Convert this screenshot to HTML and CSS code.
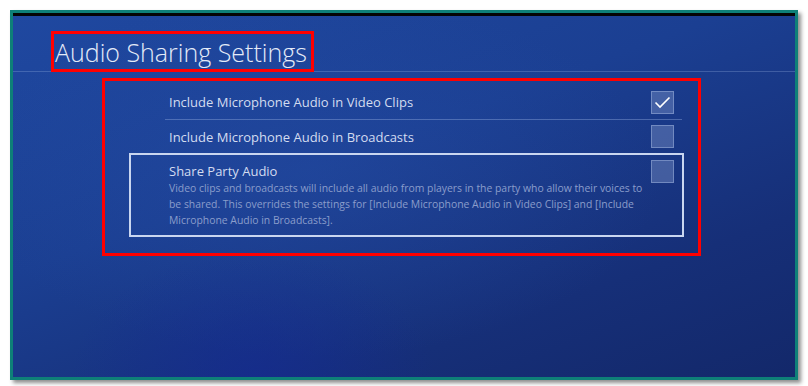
FILE: index.html
```html
<!DOCTYPE html>
<html>
<head>
<meta charset="utf-8">
<link rel="stylesheet" href="styles.css">
</head>
<body>
<div class="frame">
  <div class="screen">
    <div class="header">
      <h1 class="title">Audio Sharing Settings</h1>
    </div>
    <div class="panel">
      <div class="list">
        <div class="row">
          <span class="label">Include Microphone Audio in Video Clips</span>
          <span class="check">
            <svg width="17" height="13" viewBox="0 0 17 13"><path d="M1.5 6.5 L6 11 L15.5 1.5" fill="none" stroke="#ffffff" stroke-width="1.6"/></svg>
          </span>
        </div>
        <div class="row">
          <span class="label">Include Microphone Audio in Broadcasts</span>
          <span class="check"></span>
        </div>
        <div class="row selected">
          <div class="text">
            <div class="label">Share Party Audio</div>
            <div class="desc">Video clips and broadcasts will include all audio from players in the party who allow their voices to be shared. This overrides the settings for [Include Microphone Audio in Video Clips] and [Include Microphone Audio in Broadcasts].</div>
          </div>
          <span class="check"></span>
        </div>
      </div>
    </div>
  </div>
</div>
</body>
</html>
```
FILE: styles.css
```css
html, body {
  margin: 0;
  padding: 0;
  background: #ffffff;
}
body {
  width: 808px;
  height: 386px;
  font-family: "Open Sans", "Liberation Sans", sans-serif;
}
.frame {
  margin: 10px 0 0 10px;
  width: 782px;
  height: 364px;
  border: 3px solid #0e8078;
  box-shadow: 3px 3px 4px rgba(0, 0, 0, 0.45);
}
.screen {
  height: 100%;
  box-sizing: border-box;
  border-top: 3px solid #050505;
  background:
    radial-gradient(ellipse 260px 180px at 240px 360px, rgba(20, 40, 150, 0.55), rgba(20, 40, 150, 0) 70%),
    radial-gradient(ellipse 500px 260px at 300px 160px, rgba(40, 80, 170, 0.35), rgba(40, 80, 170, 0) 70%),
    linear-gradient(160deg, #1f48a0 0%, #1b3f92 40%, #162f78 75%, #13286a 100%);
  overflow: hidden;
}
.header {
  height: 55px;
  border-bottom: 1px solid rgba(160, 185, 230, 0.28);
  display: flex;
  align-items: flex-end;
  padding-left: 38px;
}
.title {
  margin: 0 0 -1px 0;
  height: 35px;
  border: 3px solid #ff0000;
  padding: 0 4px 0 1px;
  font-weight: 300;
  font-size: 25px;
  line-height: 36px;
  color: #e4ebf8;
  letter-spacing: 0;
}
.panel {
  margin: 6px 0 0 89px;
  width: 593px;
  height: 168px;
  border: 3px solid #ff0000;
  padding: 4px 0 0 0;
  box-sizing: content-box;
}
.list {
  margin-left: 24px;
  width: 555px;
}
.row {
  display: flex;
  align-items: center;
  justify-content: space-between;
  margin: 0 2px 0 36px;
  padding: 0 8px 0 4px;
  height: 34px;
  border-bottom: 1px solid rgba(150, 175, 225, 0.4);
}
.row:nth-child(2) {
  border-bottom: none;
  height: 33px;
}
.label {
  font-size: 13px;
  color: #d3dcf0;
  font-weight: 400;
}
.check {
  width: 21px;
  height: 21px;
  border: 1px solid rgba(170, 190, 230, 0.45);
  background: rgba(150, 170, 215, 0.35);
  display: flex;
  align-items: center;
  justify-content: center;
  flex: none;
}
.row.selected {
  margin: 0;
  height: auto;
  border: 2px solid #c9d6f0;
  padding: 5px 8px 7px 38px;
  align-items: flex-start;
}
.selected .text {
  padding-top: 2px;
}
.selected .label {
  line-height: 18px;
}
.desc {
  font-size: 10.4px;
  line-height: 16px;
  color: #8a9dcb;
  width: 482px;
}
```
